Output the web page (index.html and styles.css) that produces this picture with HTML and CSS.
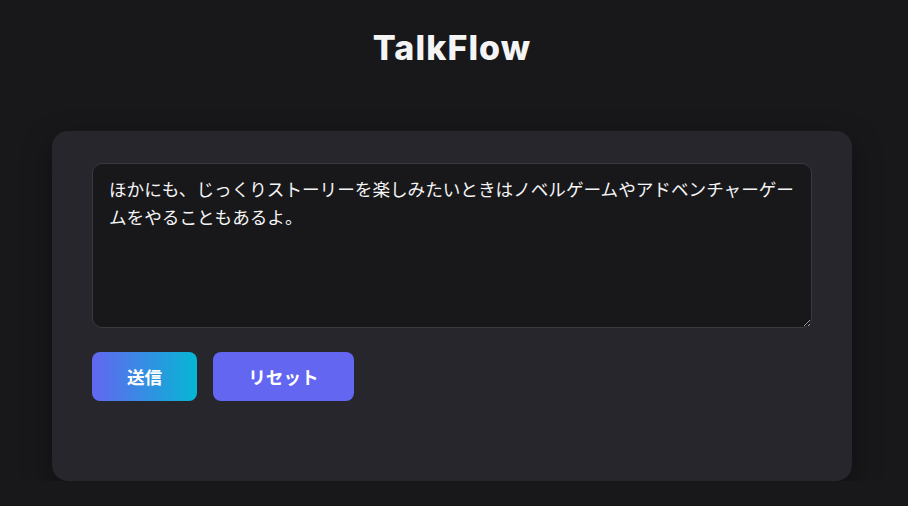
FILE: index.html
```html
<!DOCTYPE html>
<html lang="ja">
<head>
<meta charset="utf-8">
<link rel="stylesheet" href="styles.css">
</head>
<body>
<h1 class="title">TalkFlow</h1>
<main class="card">
  <textarea class="input">ほかにも、じっくりストーリーを楽しみたいときはノベルゲームやアドベンチャーゲームをやることもあるよ。</textarea>
  <div class="actions">
    <button class="btn btn-send">送信</button>
    <button class="btn btn-reset">リセット</button>
  </div>
  <div class="output"></div>
</main>
</body>
</html>
```
FILE: styles.css
```css
html, body {
  margin: 0;
  padding: 0;
  background: #18181b;
  color: #f4f4f5;
  font-family: Inter, "Noto Sans CJK JP", sans-serif;
}
body {
  padding: 28px 56px 0 52px;
}
.title {
  margin: 0;
  text-align: center;
  font-size: 34px;
  font-weight: 800;
  letter-spacing: 1.1px;
  line-height: 40px;
  color: #f4f4f5;
}
.card {
  margin-top: 63px;
  width: 800px;
  box-sizing: border-box;
  background: #26262c;
  border-radius: 16px;
  padding: 32px 40px;
  box-shadow: 0 10px 30px rgba(0, 0, 0, 0.35);
}
.input {
  display: block;
  width: 720px;
  height: 165px;
  box-sizing: border-box;
  background: #18181b;
  color: #f4f4f5;
  border: 1px solid #3a3a40;
  border-radius: 10px;
  padding: 12px 16px;
  font-family: Inter, "Noto Sans CJK JP", sans-serif;
  font-size: 17.6px;
  line-height: 28px;
  resize: vertical;
  outline: none;
}
.actions {
  display: flex;
  gap: 16px;
  margin-top: 24px;
}
.btn {
  border: none;
  border-radius: 8px;
  height: 49px;
  padding: 0 35px;
  color: #fff;
  font-family: Inter, "Noto Sans CJK JP", sans-serif;
  font-size: 17.6px;
  font-weight: 700;
  cursor: pointer;
}
.btn-send {
  background: linear-gradient(90deg, #6366f1, #06b6d4);
}
.btn-reset {
  background: #6366f1;
}
.output {
  height: 48px;
}
```
